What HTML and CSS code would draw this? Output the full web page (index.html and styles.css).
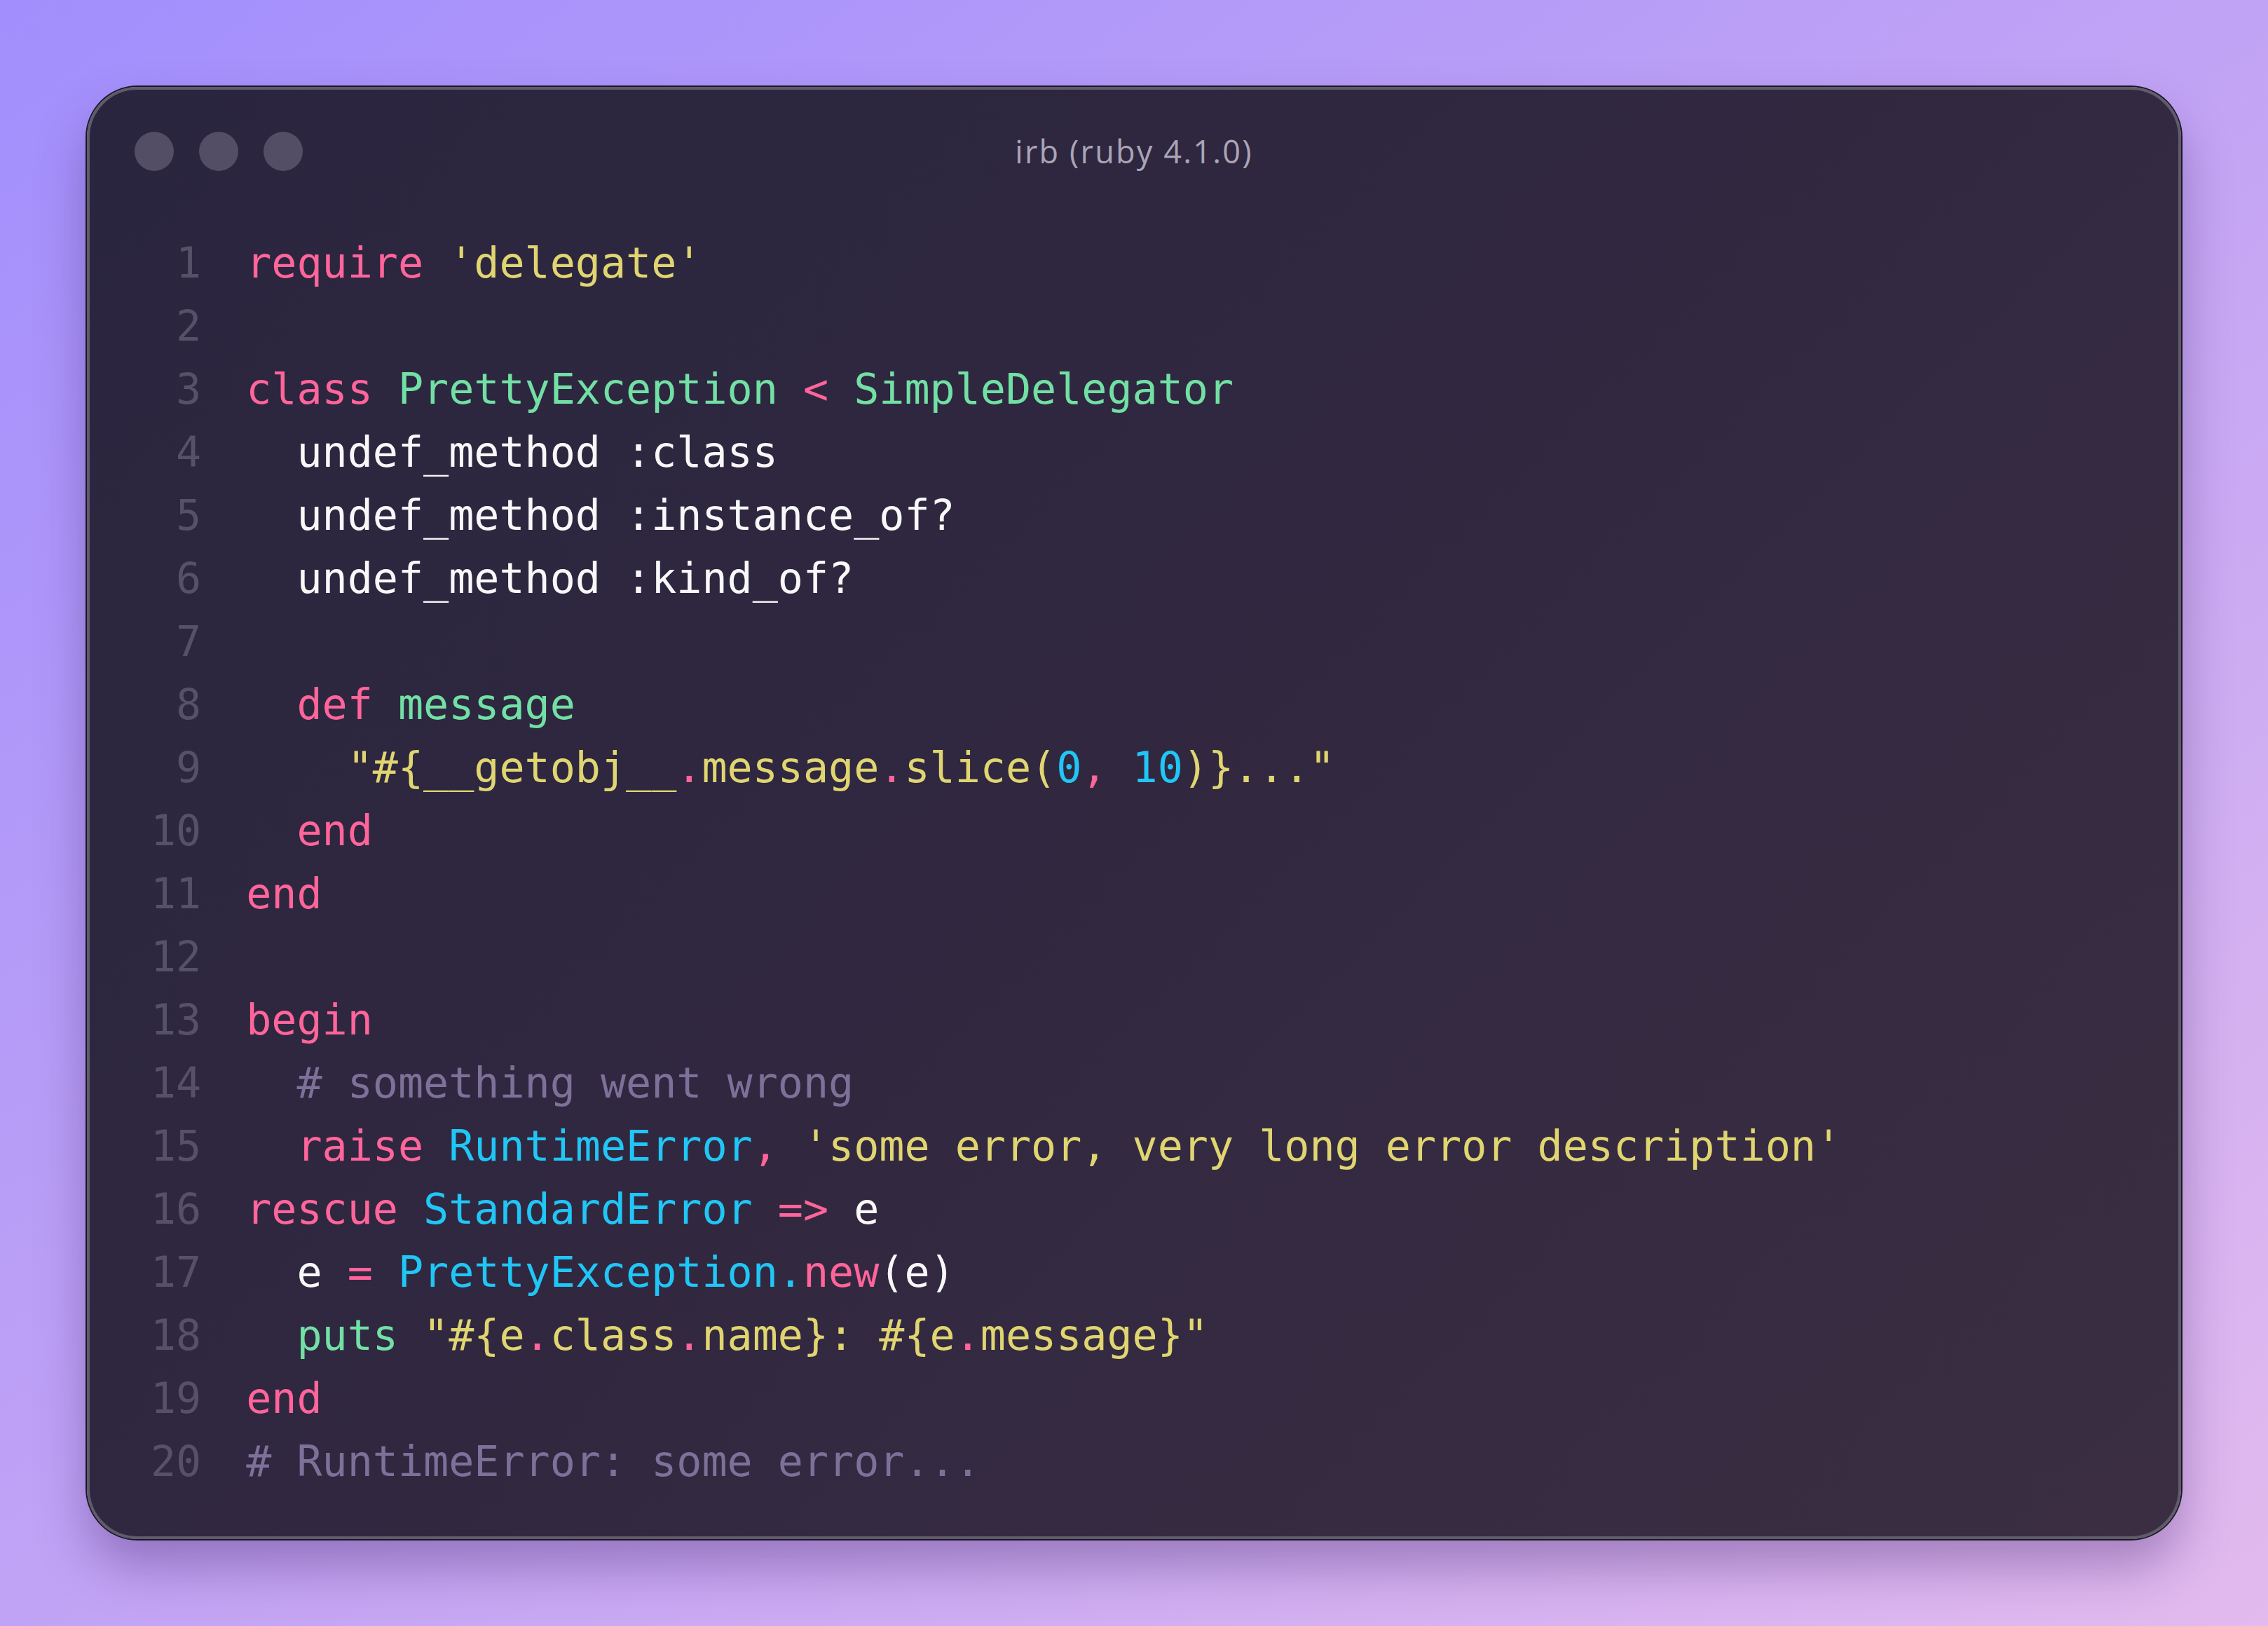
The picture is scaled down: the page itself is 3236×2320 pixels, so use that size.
FILE: index.html
```html
<!DOCTYPE html>
<html lang="en">
<head>
<meta charset="utf-8">
<title>irb (ruby 4.1.0)</title>
<link rel="stylesheet" href="styles.css">
</head>
<body>
<div class="window">
  <div class="titlebar">
    <div class="lights"><span class="light"></span><span class="light"></span><span class="light"></span></div>
    <div class="title">irb (ruby 4.1.0)</div>
    <div class="spacer"></div>
  </div>
  <div class="code">
    <div class="line"><span class="ln">1</span><span class="src"><span class="k">require</span> <span class="s">'delegate'</span></span></div>
    <div class="line"><span class="ln">2</span><span class="src"></span></div>
    <div class="line"><span class="ln">3</span><span class="src"><span class="k">class</span> <span class="g">PrettyException</span> <span class="k">&lt;</span> <span class="g">SimpleDelegator</span></span></div>
    <div class="line"><span class="ln">4</span><span class="src">  <span class="w">undef_method :class</span></span></div>
    <div class="line"><span class="ln">5</span><span class="src">  <span class="w">undef_method :instance_of?</span></span></div>
    <div class="line"><span class="ln">6</span><span class="src">  <span class="w">undef_method :kind_of?</span></span></div>
    <div class="line"><span class="ln">7</span><span class="src"></span></div>
    <div class="line"><span class="ln">8</span><span class="src">  <span class="k">def</span> <span class="g">message</span></span></div>
    <div class="line"><span class="ln">9</span><span class="src">    <span class="s">"#{__getobj__</span><span class="k">.</span><span class="s">message</span><span class="k">.</span><span class="s">slice(</span><span class="c">0</span><span class="k">,</span> <span class="c">10</span><span class="s">)}..."</span></span></div>
    <div class="line"><span class="ln">10</span><span class="src">  <span class="k">end</span></span></div>
    <div class="line"><span class="ln">11</span><span class="src"><span class="k">end</span></span></div>
    <div class="line"><span class="ln">12</span><span class="src"></span></div>
    <div class="line"><span class="ln">13</span><span class="src"><span class="k">begin</span></span></div>
    <div class="line"><span class="ln">14</span><span class="src">  <span class="cm"># something went wrong</span></span></div>
    <div class="line"><span class="ln">15</span><span class="src">  <span class="k">raise</span> <span class="c">RuntimeError</span><span class="k">,</span> <span class="s">'some error, very long error description'</span></span></div>
    <div class="line"><span class="ln">16</span><span class="src"><span class="k">rescue</span> <span class="c">StandardError</span> <span class="k">=&gt;</span> <span class="w">e</span></span></div>
    <div class="line"><span class="ln">17</span><span class="src">  <span class="w">e</span> <span class="k">=</span> <span class="c">PrettyException.</span><span class="k">new</span><span class="w">(e)</span></span></div>
    <div class="line"><span class="ln">18</span><span class="src">  <span class="g">puts</span> <span class="s">"#{e</span><span class="k">.</span><span class="s">class</span><span class="k">.</span><span class="s">name}: #{e</span><span class="k">.</span><span class="s">message}"</span></span></div>
    <div class="line"><span class="ln">19</span><span class="src"><span class="k">end</span></span></div>
    <div class="line"><span class="ln">20</span><span class="src"><span class="cm"># RuntimeError: some error...</span></span></div>
  </div>
</div>
</body>
</html>
```

FILE: styles.css
```css
html, body {
  margin: 0;
  height: 100%;
}

body {
  box-sizing: border-box;
  padding: 124px;
  background: linear-gradient(to bottom right, #a28ffd 0%, #c1a3f5 50%, #e2baee 100%);
  display: flex;
}

.window {
  flex: 1;
  box-sizing: border-box;
  border: 4px solid #5f5b6b;
  border-radius: 72px;
  background: linear-gradient(135deg, #2a253f 0%, #312840 50%, #3b2e42 100%);
  box-shadow: 0 0 0 2px #1b1724, 0 40px 70px rgba(60, 30, 100, 0.35);
  display: flex;
  flex-direction: column;
}

.titlebar {
  display: grid;
  grid-template-columns: 1fr auto 1fr;
  align-items: center;
  padding: 60px 64px 0 64px;
  height: 56px;
  box-sizing: content-box;
}

.lights {
  display: flex;
  gap: 36px;
}

.light {
  width: 56px;
  height: 56px;
  border-radius: 50%;
  background: #534e65;
}

.title {
  font-family: "Open Sans", "Noto Sans", sans-serif;
  font-size: 45px;
  color: #aaa5b6;
  letter-spacing: 2.2px;
  line-height: 56px;
}

.code {
  margin-top: 86px;
  padding-left: 87px;
  font-family: "DejaVu Sans Mono", "Liberation Mono", monospace;
  font-size: 60px;
  line-height: 90px;
}

.line {
  display: flex;
  height: 90px;
}

.ln {
  width: 2ch;
  text-align: right;
  color: #565068;
  flex: none;
}

.src {
  margin-left: 64px;
  white-space: pre;
  color: #f8f8f8;
}

.k { color: #ff659a; }
.s { color: #e0d570; }
.g { color: #72e0a4; }
.c { color: #20c6f6; }
.w { color: #f8f8f8; }
.cm { color: #7d7199; }
```
